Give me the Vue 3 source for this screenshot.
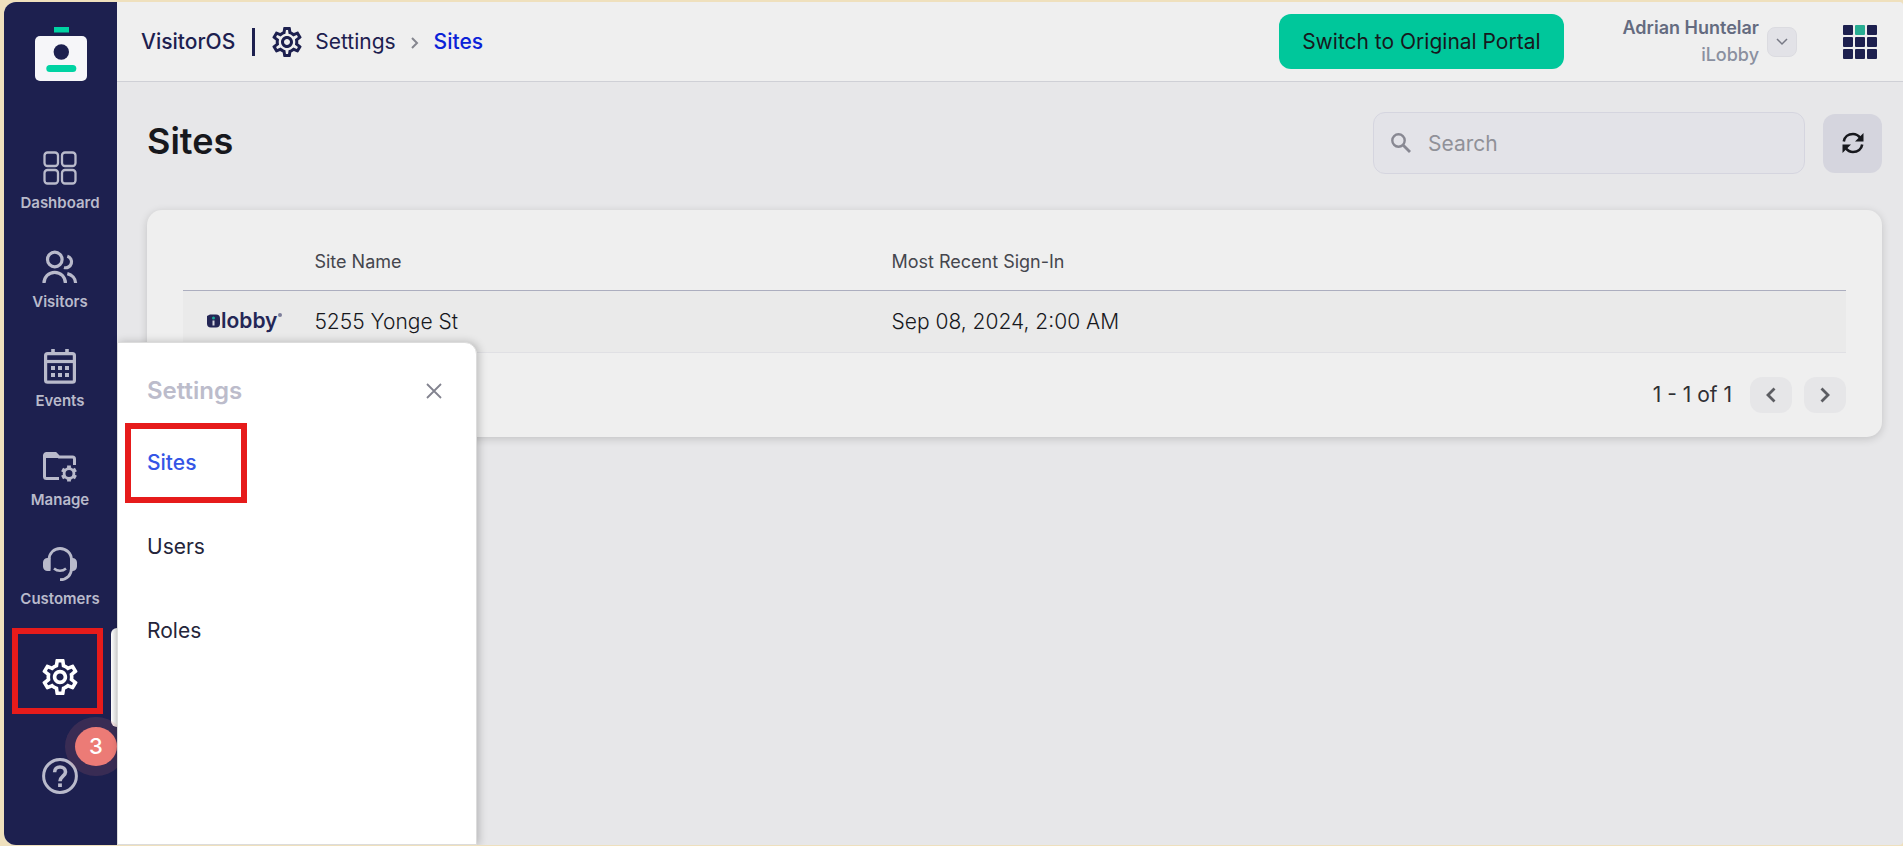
<!--
  Sites page of the visitor portal
  dark sidebar, top bar with breadcrumb, sites table and the settings flyout
-->

<template>
  <div class="portal">
    <div class="shell">
      <aside class="sidebar">
        <a href="#" class="brand" aria-label="VisitorOS home">
          <svg width="52" height="54" viewBox="0 0 52 54" aria-hidden="true">
            <rect x="19" y="0" width="15" height="5.5" fill="#00d3a3" />
            <rect x="0" y="9" width="52" height="45" rx="5" fill="#f6f6f9" />
            <circle cx="26.3" cy="25" r="7.7" fill="#1d204f" />
            <rect x="11.3" y="38" width="30" height="7" rx="3.5" fill="#00d3a3" />
          </svg>
        </a>

        <nav class="nav" aria-label="Main">
          <a
            v-for="item in navItems"
            :key="item.id"
            href="#"
            class="nav-item"
            :class="{ active: item.id === 'settings' }"
            :aria-label="item.label || item.id"
          >
            <svg v-if="item.id === 'dashboard'" class="nav-icon" viewBox="0 0 36 36" fill="none" stroke="currentColor" stroke-width="2.3">
              <rect x="2.5" y="2.5" width="13.5" height="13.5" rx="3" />
              <rect x="20" y="2.5" width="13.5" height="13.5" rx="3" />
              <rect x="2.5" y="20" width="13.5" height="13.5" rx="3" />
              <rect x="20" y="20" width="13.5" height="13.5" rx="3" />
            </svg>
            <svg v-else-if="item.id === 'visitors'" class="nav-icon" viewBox="0 0 36 36" fill="none" stroke="currentColor" stroke-width="3.2">
              <circle cx="12.8" cy="10.5" r="7.3" />
              <path d="M2 34c0-6 4.7-10.7 10.7-10.7S23.4 28 23.4 34" />
              <path d="M25.3 7.2a5.8 5.8 0 0 1-3.300 11.300" />
              <path d="M25.3 24.6c4.8 1.2 8.2 4.8 8.300 9.400" />
            </svg>
            <svg v-else-if="item.id === 'events'" class="nav-icon" viewBox="0 0 36 36" fill="none">
              <rect x="3.6" y="5.6" width="28.8" height="28.6" rx="2" stroke="currentColor" stroke-width="3.2" />
              <path d="M3 13.5h30" stroke="currentColor" stroke-width="3.2" />
              <path d="M11 1v5M25 1v5" stroke="currentColor" stroke-width="3.6" />
              <path d="M9 20h18M9 27h18" stroke="currentColor" stroke-width="4" stroke-dasharray="4 3" />
            </svg>
            <svg v-else-if="item.id === 'manage'" class="nav-icon" viewBox="0 0 36 36" fill="none" stroke="currentColor">
              <path d="M17 31.5H4.500a2 2 0 0 1-2-2V8.500a2 2 0 0 1 2-2h9l3.500 3.500h13.500a2 2 0 0 1 2 2v6" stroke-width="3" />
              <path d="M2.500 6h11l5 5h-16z" fill="currentColor" stroke="none" />
              <circle cx="27" cy="26.500" r="4.900" stroke-width="2.800" />
              <path d="M27 18.500v3M27 31.500v3M20.100 22.500l2.600 1.500M31.300 29l2.600 1.500M20.100 30.500l2.600-1.500M31.300 24l2.600-1.500" stroke-width="3.800" />
            </svg>
            <svg v-else-if="item.id === 'customers'" class="nav-icon" viewBox="0 0 36 36" fill="none" stroke="currentColor" stroke-width="2.8">
              <path d="M7 23.500v-9.500C7 7 12 2.500 18 2.500S29.500 7 29.500 14v8c0 7-4.500 11.700-11.500 11.700" />
              <path d="M8.500 12v13H5.500A4.500 4.500 0 0 1 1 20.500v-4A4.500 4.500 0 0 1 5.500 12z" fill="currentColor" stroke="none" />
              <path d="M28 12v13h2.500a4.500 4.500 0 0 0 4.500-4.500v-4A4.500 4.500 0 0 0 30.500 12z" fill="currentColor" stroke="none" />
              <path d="M12 22.500c3.500 3 8.500 3 12 0" stroke-width="2.500" />
            </svg>
            <svg v-else-if="item.id === 'settings'" class="nav-icon" viewBox="2 2 20 20" fill="currentColor">
              <path :d="gearPath" />
            </svg>
            <svg v-else class="nav-icon" viewBox="0 0 36 36" fill="none" stroke="currentColor">
              <circle cx="18" cy="18" r="16.4" stroke-width="3" />
              <path d="M12.6 14.2c0-3.200 2.300-5.200 5.400-5.200s5.500 2 5.500 4.900c0 4-5.500 4.500-5.500 9.300" stroke-width="3.6" />
              <path d="M18 25.4v3.6" stroke-width="3.8" />
            </svg>
            <span v-if="item.label" class="nav-label">{{ item.label }}</span>
            <span v-if="item.id === 'settings'" class="marker marker-nav" aria-hidden="true"></span>
            <span v-if="item.badge" class="badge">{{ item.badge }}</span>
          </a>
        </nav>
      </aside>

      <div class="main">
        <header class="topbar">
          <div class="breadcrumb">
            <span class="product">VisitorOS</span>
            <span class="divider"></span>
            <svg class="crumb-gear" viewBox="2 2 20 20" fill="currentColor" aria-hidden="true">
              <path :d="gearPath" />
            </svg>
            <a href="#" class="crumb">Settings</a>
            <svg class="crumb-arrow" viewBox="0 0 8 12" fill="none" stroke="currentColor" stroke-width="2" aria-hidden="true">
              <path d="M1 1l5 5-5 5" />
            </svg>
            <a href="#" class="crumb current">Sites</a>
          </div>

          <button type="button" class="switch-btn">Switch to Original Portal</button>

          <div class="account">
            <div class="account-text">
              <span class="account-name">Adrian Huntelar</span>
              <span class="account-org">iLobby</span>
            </div>
            <button type="button" class="account-btn" aria-label="Account menu">
              <svg width="12" height="8" viewBox="0 0 12 8" fill="none" stroke="currentColor" stroke-width="1.5">
                <path d="M1 1l5 5 5-5" />
              </svg>
            </button>
          </div>

          <button type="button" class="apps-btn" aria-label="Apps">
            <span v-for="n in 9" :key="n" :class="{ green: n === 2 }"></span>
          </button>
        </header>

        <main class="content">
          <div class="title-row">
            <h1>Sites</h1>
            <label class="search">
              <svg width="20" height="20" viewBox="0 0 20 20" fill="none" stroke="currentColor" aria-hidden="true">
                <circle cx="7.5" cy="7.5" r="6.2" stroke-width="2.4" />
                <path d="M12 12l7 7" stroke-width="2.8" />
              </svg>
              <input v-model="query" type="text" placeholder="Search" aria-label="Search" />
            </label>
            <button type="button" class="refresh-btn" aria-label="Refresh">
              <svg width="22" height="22" viewBox="0 0 22 22" fill="none" stroke="currentColor" stroke-width="2.6">
                <path d="M1.800 9.500C2.500 5 6.200 2 11 2c3 0 5.500 1.500 7.300 4" />
                <path d="M20.200 12.500C19.500 17 15.800 20 11 20c-3 0-5.500-1.500-7.300-4" />
                <path d="M21.500 1v8.500H13z" fill="currentColor" stroke="none" />
                <path d="M.5 21v-8.500H9z" fill="currentColor" stroke="none" />
              </svg>
            </button>
          </div>

          <section class="card">
            <table>
              <thead>
                <tr>
                  <th class="col-logo"></th>
                  <th class="col-name">Site Name</th>
                  <th>Most Recent Sign-In</th>
                </tr>
              </thead>
              <tbody>
                <tr v-for="site in sites" :key="site.name">
                  <td>
                    <span class="site-logo">
                      <svg width="13" height="14" viewBox="0 0 13 14" aria-hidden="true">
                        <path d="M0 2L3 .5h6a4 4 0 0 1 4 4v5a4 4 0 0 1-4 4H4a4 4 0 0 1-4-4z" fill="#242656" />
                        <circle cx="6.5" cy="4" r="1.5" fill="#18a999" />
                        <rect x="5.5" y="6.500" width="2" height="5" fill="#d6d6e0" />
                      </svg>
                      <span>lobby</span><i></i>
                    </span>
                  </td>
                  <td>{{ site.name }}</td>
                  <td>{{ site.lastSignIn }}</td>
                </tr>
              </tbody>
            </table>

            <div class="pager">
              <span class="pager-text">1 - 1 of 1</span>
              <button type="button" aria-label="Previous page">
                <svg width="10" height="16" viewBox="0 0 10 16" fill="none" stroke="currentColor" stroke-width="2.8">
                  <path d="M8.5 1.5L2 8l6.5 6.5" />
                </svg>
              </button>
              <button type="button" aria-label="Next page">
                <svg width="10" height="16" viewBox="0 0 10 16" fill="none" stroke="currentColor" stroke-width="2.8">
                  <path d="M1.5 1.5L8 8l-6.5 6.5" />
                </svg>
              </button>
            </div>
          </section>
        </main>
      </div>

      <!-- Settings flyout, sits over the page next to the sidebar -->
      <div class="flyout">
        <div class="flyout-head">
          <h2>Settings</h2>
          <button type="button" class="close-btn" aria-label="Close">
            <svg width="16" height="16" viewBox="0 0 16 16" fill="none" stroke="currentColor" stroke-width="1.8">
              <path d="M1 1l14 14M15 1L1 15" />
            </svg>
          </button>
        </div>
        <a
          v-for="link in settingsLinks"
          :key="link"
          href="#"
          class="flyout-link"
          :class="{ active: link === 'Sites' }"
        >
          {{ link }}
          <span v-if="link === 'Sites'" class="marker marker-link" aria-hidden="true"></span>
        </a>
      </div>
    </div>
  </div>
</template>

<script setup>
import { ref } from 'vue'

const query = ref('')

const navItems = [
  { id: 'dashboard', label: 'Dashboard' },
  { id: 'visitors', label: 'Visitors' },
  { id: 'events', label: 'Events' },
  { id: 'manage', label: 'Manage' },
  { id: 'customers', label: 'Customers' },
  { id: 'settings' },
  { id: 'help', badge: 3 }
]

const settingsLinks = ['Sites', 'Users', 'Roles']

const sites = [{ name: '5255 Yonge St', lastSignIn: 'Sep 08, 2024, 2:00 AM' }]

// outlined gear, used in the sidebar and in the breadcrumb
const gearPath =
  'M19.43 12.98c.04-.32.07-.64.07-.98 0-.34-.03-.66-.07-.98l2.11-1.65c.19-.15.24-.42.12-.64l-2-3.46c-.09-.16-.26-.25-.44-.25-.06 0-.12.01-.17.03l-2.49 1c-.52-.4-1.08-.73-1.69-.98l-.38-2.65C14.46 2.18 14.25 2 14 2h-4c-.25 0-.46.18-.49.42l-.38 2.65c-.61.25-1.17.59-1.69.98l-2.49-1c-.06-.02-.12-.03-.18-.03-.17 0-.34.09-.43.25l-2 3.46c-.13.22-.07.49.12.64l2.11 1.65c-.04.32-.07.65-.07.98 0 .33.03.66.07.98l-2.11 1.65c-.19.15-.24.42-.12.64l2 3.46c.09.16.26.25.44.25.06 0 .12-.01.17-.03l2.49-1c.52.4 1.08.73 1.69.98l.38 2.65c.03.24.24.42.49.42h4c.25 0 .46-.18.49-.42l.38-2.65c.61-.25 1.17-.59 1.69-.98l2.49 1c.06.02.12.03.18.03.17 0 .34-.09.43-.25l2-3.46c.12-.22.07-.49-.12-.64l-2.11-1.65zm-1.98-1.71c.04.31.05.52.05.73 0 .21-.02.43-.05.73l-.14 1.13.89.7 1.08.84-.7 1.21-1.27-.51-1.04-.42-.9.68c-.43.32-.84.56-1.25.73l-1.06.43-.16 1.13-.2 1.35h-1.4l-.19-1.35-.16-1.13-1.06-.43c-.43-.18-.83-.41-1.23-.71l-.91-.7-1.06.43-1.27.51-.7-1.21 1.08-.84.89-.7-.14-1.13c-.03-.31-.05-.54-.05-.74s.02-.43.05-.73l.14-1.13-.89-.7-1.08-.84.7-1.21 1.27.51 1.04.42.9-.68c.43-.32.84-.56 1.25-.73l1.06-.43.16-1.13.2-1.35h1.39l.19 1.35.16 1.13 1.06.43c.43.18.83.41 1.23.71l.91.7 1.06-.43 1.27-.51.7 1.21-1.07.85-.89.7.14 1.13zM12 8c-2.21 0-4 1.79-4 4s1.79 4 4 4 4-1.79 4-4-1.79-4-4-4zm0 6c-1.1 0-2-.9-2-2s.9-2 2-2 2 .9 2 2-.9 2-2 2z'
</script>

<style>
body {
  margin: 0;
  background: #efe0bd;
}
</style>

<style scoped>
.portal {
  box-sizing: border-box;
  min-height: 100vh;
  padding: 2px 0 1px 4px;
  display: flex;
  font-family: Inter, 'Liberation Sans', sans-serif;
  color: #17181d;
}

.portal * {
  box-sizing: border-box;
}

.portal a {
  color: inherit;
  text-decoration: none;
}

.portal button {
  padding: 0;
  border: 0;
  font: inherit;
  color: inherit;
  cursor: pointer;
}

.shell {
  position: relative;
  flex: 1;
  display: flex;
  border-radius: 12px 4px 4px 12px;
  overflow: hidden;
  background: #e7e7e9;
}

/* Sidebar */
.sidebar {
  flex: 0 0 113px;
  background: #1d204f;
  color: #b9bacb;
}

.brand {
  display: flex;
  justify-content: center;
  height: 131px;
  padding-top: 25px;
}

.nav {
  display: flex;
  flex-direction: column;
}

.nav-item {
  position: relative;
  display: flex;
  flex-direction: column;
  align-items: center;
  justify-content: center;
  gap: 7px;
  height: 99px;
  padding: 0 1px 2px 0;
}

.nav-icon {
  width: 36px;
  height: 36px;
}

.nav-label {
  font-size: 15px;
  line-height: 20px;
  font-weight: 600;
}

.nav-item.active {
  color: #fff;
}

.nav-item.active::after {
  content: '';
  position: absolute;
  top: 0;
  right: 0;
  width: 6px;
  height: 99px;
  border-radius: 6px 0 0 6px;
  background: linear-gradient(90deg, #fff, #dcdcdc);
}

.badge {
  position: absolute;
  top: 0;
  right: 0;
  width: 42px;
  height: 39px;
  border-radius: 50%;
  background: #ec7b76;
  box-shadow: 0 0 0 10px rgba(236, 123, 118, 0.14);
  color: #fff;
  font-size: 22px;
  line-height: 39px;
  font-weight: 500;
  text-align: center;
}

.marker {
  position: absolute;
  border: 6px solid #e61b1b;
}

.marker-nav {
  top: 0;
  left: 8px;
  width: 91px;
  height: 86px;
}

.marker-link {
  top: 0;
  left: 7px;
  width: 122px;
  height: 80px;
}

/* Top bar */
.main {
  flex: 1;
  min-width: 0;
}

.topbar {
  display: flex;
  align-items: center;
  height: 80px;
  padding: 0 26px 0 24px;
  background: #efefef;
  border-bottom: 1px solid #cfd0d6;
}

.breadcrumb {
  display: flex;
  align-items: center;
  margin-right: auto;
  font-size: 21px;
  line-height: 28px;
  color: #1d204f;
}

.product {
  font-weight: 500;
}

.divider {
  width: 3px;
  height: 28px;
  margin: 0 17px;
  background: #1d204f;
}

.crumb-gear {
  width: 30px;
  height: 30px;
  margin-right: 13px;
}

.crumb-arrow {
  width: 8px;
  height: 12px;
  margin: 3px 15px 0;
  color: #85868f;
}

.breadcrumb .current {
  color: #0a22d8;
  font-weight: 500;
}

.topbar .switch-btn {
  height: 55px;
  padding: 0 23px;
  border-radius: 12px;
  background: #00c79b;
  font-size: 21px;
}

.account {
  display: flex;
  align-items: center;
  gap: 8px;
  margin: 0 46px 0 59px;
}

.account-text {
  display: flex;
  flex-direction: column;
  padding-bottom: 2px;
  text-align: right;
  font-size: 18px;
  line-height: 27px;
  font-weight: 500;
}

.account-name {
  color: #646b80;
  font-weight: 600;
}

.account-org {
  color: #8a90a0;
}

.account .account-btn {
  display: grid;
  place-items: center;
  width: 30px;
  height: 30px;
  border: 1px solid #dbdbe0;
  border-radius: 8px;
  background: #e2e2e7;
  color: #777985;
}

.topbar .apps-btn {
  display: grid;
  grid-template-columns: repeat(3, 10px);
  gap: 2px;
  background: none;
}

.apps-btn span {
  height: 10px;
  border-radius: 1px;
  background: #1d204f;
}

.apps-btn .green {
  background: #28ad92;
}

/* Page content */
.content {
  padding: 30px 21px 30px 30px;
}

.title-row {
  display: flex;
  align-items: center;
  gap: 18px;
  margin-bottom: 36px;
}

h1 {
  margin: 0 auto 4px 0;
  font-size: 36px;
  line-height: 44px;
  font-weight: 600;
}

.search {
  display: flex;
  align-items: center;
  gap: 17px;
  width: 432px;
  height: 62px;
  padding: 0 17px;
  border: 1px solid #d5d5df;
  border-radius: 12px;
  background: #e3e3e8;
  color: #888892;
}

.search input {
  flex: 1;
  min-width: 0;
  padding: 0;
  border: 0;
  outline: 0;
  background: none;
  font: inherit;
  font-size: 21px;
  color: #17181d;
}

.search input::placeholder {
  color: #909198;
}

.title-row .refresh-btn {
  display: grid;
  place-items: center;
  width: 59px;
  height: 59px;
  border-radius: 12px;
  background: #d5d5de;
}

.card {
  padding: 24px 36px;
  border-radius: 15px;
  background: #efefef;
  box-shadow: 0 2px 8px rgba(0, 0, 0, 0.16);
}

table {
  width: 100%;
  table-layout: fixed;
  border-collapse: collapse;
}

th {
  height: 56px;
  padding: 0 15px;
  border-bottom: 1px solid #acaebf;
  color: #45464d;
  font-size: 18px;
  font-weight: 400;
  text-align: left;
}

.col-logo {
  width: 7%;
}

.col-name {
  width: 34.7%;
}

td {
  height: 62px;
  padding: 0 15px;
  border-bottom: 1px solid #e0e0e4;
  background: #eaeaea;
  font-size: 21px;
  font-weight: 300;
}

.site-logo {
  display: flex;
  align-items: center;
  gap: 1px;
  padding-left: 9px;
  color: #242656;
  font-size: 21px;
  line-height: 24px;
  font-weight: 600;
}

.site-logo i {
  align-self: flex-start;
  width: 4px;
  height: 4px;
  margin-top: 4px;
  border-radius: 50%;
  background: #7d7e9a;
}

.pager {
  display: flex;
  align-items: center;
  justify-content: flex-end;
  gap: 12px;
  padding-top: 24px;
}

.pager-text {
  margin-right: 6px;
  font-size: 21px;
  color: #2f3034;
}

.pager button {
  display: grid;
  place-items: center;
  width: 42px;
  height: 36px;
  border-radius: 12px;
  background: #e6e6e8;
  color: #5c5d62;
}

/* Settings flyout */
.flyout {
  position: absolute;
  left: 113px;
  bottom: 0;
  width: 360px;
  height: 503px;
  border: 1px solid #dcdcdc;
  border-radius: 0 12px 0 0;
  background: #fff;
  box-shadow: 2px 0 8px rgba(0, 0, 0, 0.22);
}

.flyout-head {
  display: flex;
  align-items: center;
  justify-content: space-between;
  height: 80px;
  padding: 16px 34px 0 29px;
}

h2 {
  margin: 0;
  color: #bcbccb;
  font-size: 24px;
  line-height: 32px;
  font-weight: 600;
}

.flyout .close-btn {
  display: flex;
  background: none;
  color: #82838f;
}

.flyout-link {
  position: relative;
  display: flex;
  align-items: center;
  height: 84px;
  padding: 0 29px 4px;
  font-size: 21px;
  line-height: 28px;
}

.flyout .flyout-link {
  color: #25253a;
}

.flyout .flyout-link.active {
  color: #3555e6;
  font-weight: 500;
}
</style>
